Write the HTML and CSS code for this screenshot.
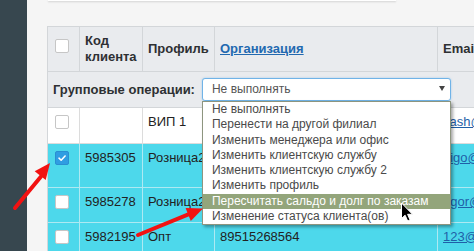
FILE: index.html
```html
<!DOCTYPE html>
<html lang="ru">
<head>
<meta charset="utf-8">
<title>Клиенты</title>
<link rel="stylesheet" href="styles.css">
</head>
<body>
<div class="page">
  <aside class="sidebar"></aside>
  <main class="main">
    <div class="topcard"></div>
    <div class="grid">
      <div class="cell h h-cb"><span class="cb"></span></div>
      <div class="cell h">Код<br>клиента</div>
      <div class="cell h">Профиль</div>
      <div class="cell h"><a class="sort-link" href="#">Организация</a></div>
      <div class="cell h">Email</div>

      <div class="group">
        <span class="group-label">Групповые операции:</span>
        <div class="fake-select">
          <span>Не выполнять</span>
          <span class="caret"></span>
          <ul class="dropdown">
            <li>Не выполнять</li>
            <li>Перенести на другой филиал</li>
            <li>Изменить менеджера или офис</li>
            <li>Изменить клиентскую службу</li>
            <li>Изменить клиентскую службу 2</li>
            <li>Изменить профиль</li>
            <li class="active">Пересчитать сальдо и долг по заказам</li>
            <li>Изменение статуса клиента(ов)</li>
          </ul>
        </div>
      </div>

      <div class="cell w cb-cell"><span class="cb"></span></div>
      <div class="cell w"></div>
      <div class="cell w">ВИП 1</div>
      <div class="cell w"></div>
      <div class="cell w"><a class="mail" href="#">kash@mail.ru</a></div>

      <div class="cell c cb-cell"><span class="cb checked"><svg viewBox="0 0 14 14" width="12" height="12"><path d="M3.5 7.2 L6 9.6 L10.6 4.6" fill="none" stroke="#fff" stroke-width="1.8" stroke-linecap="round" stroke-linejoin="round"/></svg></span></div>
      <div class="cell c">5985305</div>
      <div class="cell c">Розница2</div>
      <div class="cell c"></div>
      <div class="cell c"><a class="mail" href="#">digo@mail.ru</a></div>

      <div class="cell c cb-cell"><span class="cb"></span></div>
      <div class="cell c">5985278</div>
      <div class="cell c">Розница2</div>
      <div class="cell c"></div>
      <div class="cell c"><a class="mail" href="#">egor@mail.ru</a></div>

      <div class="cell c cb-cell"><span class="cb"></span></div>
      <div class="cell c">5982195</div>
      <div class="cell c">Опт</div>
      <div class="cell c">89515268564</div>
      <div class="cell c"><a class="mail" href="#">123@mail.ru</a></div>
    </div>
  </main>
  <svg class="overlay" width="474" height="251" viewBox="0 0 474 251">
    <line x1="15" y1="208" x2="41" y2="176.5" stroke="#f21212" stroke-width="4" stroke-linecap="round"/>
    <polygon points="50,163 45.7,179.9 34.7,171.3" fill="#f21212"/>
    <line x1="138" y1="235" x2="189" y2="214.2" stroke="#f21212" stroke-width="4" stroke-linecap="round"/>
    <polygon points="203,208.5 190.8,221 185.6,208" fill="#f21212"/>
    <path transform="translate(401.5 203)" d="M0 0 V15.5 L3.6 12.2 L6.2 18 L8.6 17 L6.1 11.3 H11 Z" fill="#000" stroke="#fff" stroke-width="1" stroke-linejoin="round"/>
  </svg>
</div>
</body>
</html>
```
FILE: styles.css
```css
* { box-sizing: border-box; }
html, body { margin: 0; }
body {
  background: #f5f5f5;
  font-family: "Liberation Sans", Arial, sans-serif;
  font-size: 13px;
  color: #222;
  overflow: hidden;
}
.page {
  position: relative;
  display: flex;
  width: 474px;
  height: 251px;
  overflow: hidden;
}
.sidebar {
  width: 27px;
  flex: none;
  background: #37474f;
}
.main {
  flex: 1;
  min-width: 0;
  padding-left: 20px;
}
.topcard {
  width: 348px;
  height: 1px;
  margin-left: 1px;
  background: #fff;
  box-shadow: 0 1px 2px rgba(0, 0, 0, 0.2);
}
.grid {
  margin-top: 25px;
  display: grid;
  grid-template-columns: 32px 63px 72px 223px 160px;
  grid-template-rows: 45px 36px 36px 44px 35px 35px;
  width: max-content;
  border-left: 1px solid #d3d6d9;
  border-top: 1px solid #d3d6d9;
}
.cell {
  border-right: 1px solid;
  border-bottom: 1px solid;
  padding: 5px 5px 0;
  line-height: 17px;
  white-space: nowrap;
  overflow: hidden;
}
.h {
  background: #e9ebee;
  border-color: #d3d6d9;
  font-weight: bold;
  color: #2e3033;
  display: flex;
  align-items: center;
  padding: 0 5px;
  line-height: 16px;
}
.h-cb {
  align-items: flex-start;
  padding: 12px 0 0 7px;
}
.sort-link {
  color: #2269b0;
  text-decoration: underline;
}
.w {
  background: #fff;
  border-color: #dcdcdc;
}
.c {
  background: #4dd8eb;
  border-color: #aee9f2;
}
.cb-cell {
  padding: 7px 0 0 7px;
}
.cb {
  display: flex;
  align-items: center;
  justify-content: center;
  width: 14px;
  height: 14px;
  border: 1px solid #c6c6c6;
  border-radius: 2px;
  background: #fff;
}
.cb.checked {
  background: #2f9de2;
  border-color: #2a8fd2;
}
.mail {
  color: #1f5fa8;
  text-decoration: underline;
}
.group {
  grid-column: 1 / -1;
  background: #e9ebee;
  border-right: 1px solid #d3d6d9;
  border-bottom: 1px solid #d3d6d9;
  padding: 6px 5px;
  display: flex;
  align-items: center;
  gap: 7px;
}
.group-label {
  font-weight: bold;
  color: #2e3033;
  white-space: nowrap;
}
.fake-select {
  position: relative;
  flex: none;
  width: 249px;
  height: 23px;
  border: 1px solid #70b3e7;
  border-radius: 3px;
  background: #fff;
  box-shadow: 0 0 2px rgba(102, 175, 233, 0.6);
  font-size: 12px;
  color: #555;
  line-height: 21px;
  padding-left: 9px;
}
.caret {
  position: absolute;
  right: 5px;
  top: 7px;
  width: 0;
  height: 0;
  border-left: 3.5px solid transparent;
  border-right: 3.5px solid transparent;
  border-top: 5px solid #444;
}
.dropdown {
  position: absolute;
  left: -1px;
  top: calc(100% + 1px);
  width: 249px;
  margin: 0;
  padding: 0;
  list-style: none;
  background: #fff;
  border: 1px solid #8d957f;
  box-shadow: 2px 2px 3px rgba(0, 0, 0, 0.35);
  z-index: 5;
}
.dropdown li {
  line-height: 15.3px;
  padding-left: 9px;
  color: #4a4a4a;
  white-space: nowrap;
}
.dropdown li.active {
  background: #93a57b;
  color: #fff;
}
.overlay {
  position: absolute;
  left: 0;
  top: 0;
  pointer-events: none;
  z-index: 10;
}
```
